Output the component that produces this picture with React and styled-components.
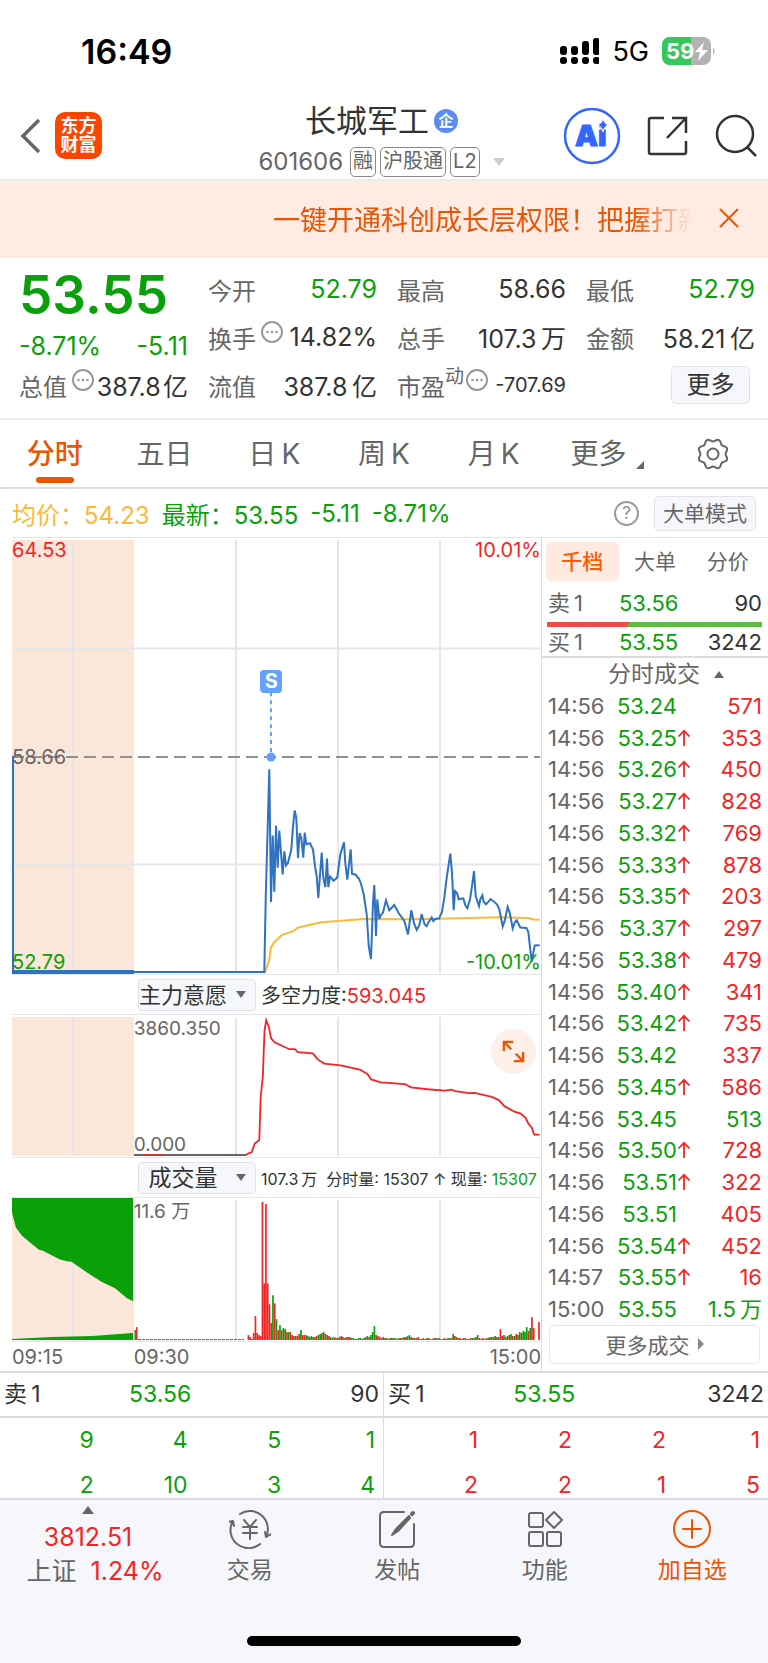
import React from 'react'
import styled, { createGlobalStyle, ThemeProvider } from 'styled-components'

const theme = {
  up: '#f52424',
  down: '#0aa00a',
  brand: '#ea5504',
  dark: '#333333',
  muted: '#666666',
  line: '#e3e6ec',
  rule: '#d9dce3',
  panel: '#f6f7fa',
  auction: '#fbe6da',
  price: '#2f72c0',
  average: '#fdb933',
  marker: '#62a2fb',
}

const GlobalStyle = createGlobalStyle`
  * {
    box-sizing: border-box;
  }

  body {
    margin: 0;
    background: #ffffff;
    color: #333333;
    font-family: Inter, "Noto Sans CJK SC", sans-serif;
  }

  button,
  select {
    margin: 0;
    padding: 0;
    border: 0;
    background: none;
    color: inherit;
    font: inherit;
    cursor: pointer;
  }

  svg {
    display: block;
    flex-shrink: 0;
  }
`

const tone = ({ theme: t, $tone }) => t[$tone] || t.dark

const Page = styled.div`
  display: flex;
  flex-direction: column;
  min-height: 100vh;
`

/* ---------- status bar ---------- */

const StatusBar = styled.div`
  display: flex;
  align-items: center;
  justify-content: space-between;
  height: 96px;
  padding: 6px 52px 0 81px;
  color: #000000;
`

const Clock = styled.time`
  font-size: 34px;
  font-weight: 600;
`

const StatusIcons = styled.div`
  display: flex;
  align-items: center;
  gap: 13px;
  font-size: 27px;
`

const Signal = () => (
  <svg width="40" height="28" viewBox="0 0 40 28">
    {[10, 10, 15, 18].map((h, i) => (
      <g key={i}>
        <rect x={1 + i * 11} y={19 - h} width="7" height={h - 1} rx="3" />
        <rect x={1 + i * 11} y="20" width="7" height="7" rx="3" />
      </g>
    ))}
  </svg>
)

const Battery = () => (
  <svg width="54" height="28" viewBox="0 0 54 28">
    <defs>
      <clipPath id="battery">
        <rect width="49" height="28" rx="8" />
      </clipPath>
    </defs>
    <g clipPath="url(#battery)">
      <rect width="49" height="28" fill="#b3b3b3" />
      <rect width="29" height="28" fill="#34c759" />
    </g>
    <path d="M51 10 q3 4 0 8z" fill="#b3b3b3" />
    <text x="4" y="22" fill="#fff" fontSize="22" fontWeight="700">59</text>
    <path d="M42 5 L33 15 H38 L36 24 L46 13 H40z" fill="#fff" />
  </svg>
)

/* ---------- title bar ---------- */

const TitleBar = styled.header`
  display: grid;
  grid-template-columns: 1fr auto 1fr;
  align-items: center;
  height: 85px;
  padding: 0 10px 0 19px;
  border-bottom: 2px solid #ececec;
`

const TitleSide = styled.div`
  display: flex;
  align-items: center;
  gap: 12px;
  padding-bottom: 4px;
`

const TitleActions = styled(TitleSide)`
  justify-content: flex-end;
  gap: 26px;
`

const AppLogo = styled.span`
  width: 47px;
  height: 47px;
  padding: 4px 5px;
  border-radius: 10px;
  background: #ff4400;
  color: #ffffff;
  font-size: 18px;
  font-weight: 700;
  line-height: 19px;
  text-align: center;
`

const TitleText = styled.div`
  padding: 3px 14px 0 0;
`

const StockName = styled.h1`
  display: flex;
  align-items: center;
  justify-content: center;
  gap: 5px;
  margin: 0;
  font-size: 31px;
  font-weight: 400;
  line-height: 42px;
`

const CompanyBadge = styled.span`
  width: 24px;
  height: 24px;
  border-radius: 50%;
  background: #5b8def;
  color: #ffffff;
  font-size: 15px;
  font-weight: 700;
  line-height: 23px;
  text-align: center;
`

const StockCode = styled.div`
  display: flex;
  align-items: center;
  gap: 4px;
  margin-top: 3px;
  color: ${({ theme }) => theme.muted};
  font-size: 24px;
  line-height: 34px;
`

const Code = styled.span`
  margin-right: 3px;
`

const Tag = styled.span`
  height: 30px;
  padding: 0 2px;
  border: 1px solid #888888;
  border-radius: 5px;
  font-size: 20px;
  line-height: 27px;
`

const Caret = styled.i`
  width: 0;
  height: 0;
  margin-left: ${({ $space }) => $space || 0}px;
  border: ${({ $size }) => $size}px solid transparent;
  border-top-width: ${({ $up, $size }) => ($up ? 0 : $size + 2)}px;
  border-bottom-width: ${({ $up, $size }) => ($up ? $size + 2 : 0)}px;
  border-top-color: ${({ $color }) => $color};
  border-bottom-color: ${({ $color }) => $color};
`

/* ---------- banner ---------- */

const Banner = styled.div`
  display: flex;
  align-items: center;
  justify-content: flex-end;
  height: 77px;
  padding: 0 29px 3px 0;
  background: #feece4;
  color: ${({ theme }) => theme.brand};
`

const BannerText = styled.a`
  margin-right: 14px;
  color: inherit;
  font-size: 27px;
  white-space: nowrap;
  text-decoration: none;
  mask-image: linear-gradient(to right, #000 84%, transparent 97%);
`

/* ---------- quote ---------- */

const Quote = styled.section`
  display: grid;
  grid-template-columns: repeat(4, 1fr);
  grid-auto-rows: 48px;
  column-gap: 20px;
  padding: 7px 13px 9px 19px;
`

const PriceBlock = styled.div`
  grid-row: span 2;
  color: ${({ theme }) => theme.down};
`

const Price = styled.div`
  font-size: 53px;
  font-weight: 600;
  line-height: 60px;
`

const Change = styled.div`
  display: flex;
  justify-content: space-between;
  font-size: 25px;
  line-height: 42px;
`

const Stat = styled.div`
  display: flex;
  align-items: center;
  white-space: nowrap;
`

const StatLabel = styled.span`
  color: ${({ theme }) => theme.muted};
  font-size: 24px;
`

const Super = styled.sup`
  align-self: flex-start;
  color: ${({ theme }) => theme.muted};
  font-size: 19px;
  line-height: 32px;
`

const StatValue = styled.span`
  margin-left: auto;
  color: ${tone};
  font-size: ${({ $small }) => ($small ? 20 : 25)}px;
`

const HintButton = styled.button`
  align-self: flex-start;
  margin: 8px 0 0 ${({ $flush }) => ($flush ? 2 : 5)}px;
`

const Hint = ({ flush }) => (
  <HintButton $flush={flush} aria-label="说明">
    <svg width="22" height="22" viewBox="0 0 22 22" fill="#999">
      <circle cx="11" cy="11" r="10" fill="none" stroke="#999" strokeWidth="2" />
      <circle cx="6.5" cy="11" r="1.3" />
      <circle cx="11" cy="11" r="1.3" />
      <circle cx="15.5" cy="11" r="1.3" />
    </svg>
  </HintButton>
)

const BoxButton = styled.button`
  border: 1px solid #dfe4ec;
  border-radius: 5px;
  background: ${({ theme }) => theme.panel};
`

const MoreButton = styled(BoxButton)`
  width: 79px;
  height: 38px;
  margin-left: auto;
  margin-right: 5px;
  color: ${({ theme }) => theme.dark};
  font-size: 24px;
  line-height: 34px;
`

/* ---------- period tabs ---------- */

const Tabs = styled.nav`
  display: grid;
  grid-template-columns: repeat(7, 1fr);
  height: 71px;
  border-top: 2px solid #ededed;
  border-bottom: 2px solid ${({ theme }) => theme.rule};
`

const Tab = styled.button`
  display: flex;
  flex-direction: column;
  align-items: center;
  justify-content: flex-end;
  gap: 3px;
  color: ${({ theme, $active }) => ($active ? theme.brand : theme.muted)};
  font-size: 28px;
  font-weight: ${({ $active }) => ($active ? 500 : 400)};
  line-height: 40px;

  &::after {
    content: '';
    width: 38px;
    height: 6px;
    margin-bottom: 4px;
    border-radius: 3px;
    background: ${({ theme, $active }) => ($active ? theme.brand : 'transparent')};
  }
`

const TabLabel = styled.span`
  display: flex;
  align-items: center;
  gap: 10px;
  height: 40px;
  padding-left: ${({ $menu }) => ($menu ? 8 : 0)}px;
`

const Corner = styled.i`
  align-self: flex-end;
  margin-bottom: 5px;
  border: 4px solid ${({ theme }) => theme.muted};
  border-top-color: transparent;
  border-left-color: transparent;
`

/* ---------- minute chart ---------- */

const Summary = styled.div`
  display: flex;
  align-items: center;
  height: 48px;
  padding: 0 12px;
  font-size: 24px;
`

const SummaryItem = styled.span`
  margin-right: 12px;
  color: ${tone};
`

const QuestionButton = styled.button`
  width: 25px;
  height: 25px;
  margin-left: auto;
  margin-right: 15px;
  border: 2px solid #999999;
  border-radius: 50%;
  color: #888888;
  font-size: 17px;
  line-height: 20px;
`

const ModeButton = styled(BoxButton)`
  height: 35px;
  padding: 0 8px;
  color: ${({ theme }) => theme.muted};
  font-size: 21px;
  line-height: 31px;
`

const Board = styled.main`
  display: flex;
  border-bottom: 2px solid ${({ theme }) => theme.rule};
`

const Charts = styled.section`
  flex: 1;
  min-width: 0;
  padding-left: 12px;
  border-right: 1px solid ${({ theme }) => theme.rule};
`

const ChartBox = styled.div`
  position: relative;
  height: ${({ $height }) => $height}px;
  border-top: 1px solid ${({ theme }) => theme.line};
  border-bottom: 1px solid ${({ theme }) => theme.line};

  > svg {
    width: 100%;
    height: 100%;
  }
`

const AxisLabel = styled.span`
  position: absolute;
  top: ${({ $top }) => ($top === undefined ? 'auto' : `${$top}px`)};
  bottom: ${({ $top }) => ($top === undefined ? '0' : 'auto')};
  left: ${({ $right, $inset }) => ($right ? 'auto' : $inset ? '23%' : '0')};
  right: ${({ $right }) => ($right ? '0' : 'auto')};
  color: ${tone};
  font-size: ${({ $inset }) => ($inset ? 19 : 20)}px;
  line-height: 24px;
`

const SellMark = styled.span`
  position: absolute;
  top: 132px;
  left: 49%;
  width: 22px;
  height: 23px;
  margin-left: -11px;
  border-radius: 4px;
  background: ${({ theme }) => theme.marker};
  color: #ffffff;
  font-size: 20px;
  font-weight: 700;
  line-height: 23px;
  text-align: center;
`

const ExpandButton = styled.button`
  position: absolute;
  top: 14px;
  right: 5px;
  width: 45px;
  height: 45px;
  padding: 11px;
  border-radius: 50%;
  background: #fdf0e9;
`

const IndicatorBar = styled.div`
  display: flex;
  align-items: center;
  height: 39px;
  padding-left: 126px;
`

const SelectWrap = styled.label`
  position: relative;
  width: 118px;
  height: 32px;
  margin-right: 5px;
  flex-shrink: 0;
`

const IndicatorSelect = styled.select`
  width: 100%;
  height: 100%;
  padding: 0 28px 0 0;
  appearance: none;
  border: 1px solid #dfe3e8;
  border-radius: 4px;
  background: ${({ theme }) => theme.panel};
  color: ${({ theme }) => theme.dark};
  font-size: ${({ $size }) => $size}px;
  text-align-last: center;
`

const SelectArrow = styled(Caret)`
  position: absolute;
  top: 12px;
  right: 10px;
  pointer-events: none;
`

const IndicatorText = styled.span`
  font-size: ${({ $small }) => ($small ? 16 : 20)}px;
  white-space: pre;
`

const Tint = styled.span`
  color: ${tone};
`

const TimeAxis = styled.div`
  display: grid;
  grid-template-columns: 23% 1fr auto;
  height: 29px;
  color: ${({ theme }) => theme.muted};
  font-size: 20px;
  line-height: 30px;
`

const PRICE_LINE =
  '1,219 1,436 252.3,436 253.7,363 257.3,232.3 259,365.7 260.7,299 262.3,355.3 264,289 265.7,331.3 ' +
  '267.3,294 270.7,338 272.3,314.7 274,329 276,326.3 279.3,313 281,289.7 282.7,273.7 284.3,281.3 ' +
  '286,321.3 287.7,296.3 289.3,301.3 291.3,321 292.7,296 294.3,307.7 298,306.7 301,313 303,329.7 ' +
  '304.7,339.7 306.3,361.7 309.7,316 311.3,341.3 313.3,350.7 315,322 316.3,350.7 318,340 321.7,344.3 ' +
  '325.3,341 328.3,318 332,305.7 333.3,326.3 335.3,343.3 338.7,312.7 340,337.3 343.7,338.3 347,342.3 ' +
  '349,347.3 351.7,358 354.7,378 356.7,409.7 359,423 361,366.3 362.3,348.7 364,399.7 365.3,363 ' +
  '367.3,383 368.7,379 371,376.3 374,364 377.3,374 382.3,368.7 386.3,376.3 392.3,384.7 396,398.3 ' +
  '399.3,374 402,387 404.7,393.7 407.3,389 409.7,378 412.7,388.3 414.7,390 416.7,385.7 419.7,381.3 ' +
  '421.3,384.7 423.3,382.7 427,382.3 430,375.7 432.3,361.3 434.7,341.3 438.3,317 440,336.3 441.7,374 ' +
  '443,354.7 445,356.7 446.7,363 451.3,362 453.3,369 455.3,372 458,363 460,349.7 462,334.7 463.7,359.7 ' +
  '467,369.7 468.3,363 470.3,359 471.7,365.7 474,368 478.7,362.7 485,368 487.3,373 490.7,390.3 ' +
  '492.7,384.7 495.7,370.7 497.7,376.3 500.7,392.3 502.7,386.3 504.7,384 508.3,391.3 514.3,391.7 ' +
  '516.3,395.7 519.7,425.7 522.7,409.3 527.7,409'

const AVERAGE_LINE =
  '253,437 257.3,423 259,411.3 262,406.3 269.7,399 281.7,394.7 286.3,391.3 309.7,386 326.3,384.7 ' +
  '351.3,382.7 394.7,383 438,382.3 488,381 516.3,381.7 521.3,383.3 527.7,383.5'

const FORCE_LINE =
  '234,142 236.5,140.3 239.6,139.3 242.8,130.3 247.3,126.7 248.7,82.7 250.8,62.7 252.5,16 254.2,5.3 ' +
  '257,12.7 259.1,23.7 262.6,27.7 268.8,30.7 277.5,34.7 282.8,34.7 285.9,37.7 300.8,39 306,45.3 ' +
  '312.3,49.3 328.6,51 347.8,55.3 355.4,59.7 359.2,65.3 368.6,68.3 393,70 398.9,73.3 415.5,75.3 ' +
  '432.9,76.7 439.9,75.7 443.3,77.3 457.2,79.3 462.5,79 479.8,83 486.8,86.3 492.7,92.7 502.4,98 ' +
  '508.7,100 513.6,104.3 516.3,110 519.8,114.3 522.2,121.3 527.5,121.3'

// bar heights, one per slot; below zero means a falling minute
const VOLUMES = [
  5, 3, 1, 7, 24, 7, 5, 4, 139, 57, 137, 57, 36, 17, -45, 37, -21, 10, -15, 10, -12, -11, 8, -8, 8, 5, -4,
  4, 4, 6, -10, 5, 5, -5, -4, 3, -4, 3, -3, 4, -5, -6, 7, -8, 6, -5, 4, -3, -2, 3, -2, 2, -3, 4, 3, -2, 3,
  3, -3, 2, -2, 1, -1, -2, -2, 1, -2, 3, -4, 3, -5, -8, -14, 5, 4, -3, 2, 3, -2, 2, 1, -2, 2, -2, -2, 1,
  -2, 2, -2, 3, -3, -4, -5, 3, 2, -2, 2, 3, 1, -1, 2, -1, -2, 2, -1, 1, 2, -2, 2, -2, 1, -1, 2, 1, -2, 2,
  -2, -6, 4, -3, 2, 2, 1, -2, 2, 1, -1, 2, -2, -2, 3, -5, 2, 1, 2, -1, -2, 2, -3, -3, 3, -4, 3, -3, 11, 4,
  -5, 3, -4, 5, -6, 4, -4, 6, -5, -8, 7, -9, -8, -13, 9, -12, 23, 12, 0, 0, 18,
]

const plot = { vectorEffect: 'non-scaling-stroke', fill: 'none' }

const Grid = ({ height }) => (
  <>
    <rect x="0" y="2" width="122" height={height - 3} fill={theme.auction} />
    <g stroke={theme.line} strokeWidth="2">
      {[61, 224, 326, 428].map(x => (
        <line key={x} x1={x} x2={x} y1="2" y2={height - 1} />
      ))}
    </g>
  </>
)

const PriceChart = () => (
  <ChartBox $height={438}>
    <svg viewBox="0 0 529 438" preserveAspectRatio="none">
      <Grid height={438} />
      <path d="M0 111H529M0 328H529" stroke={theme.line} strokeWidth="2" />
      <path d="M0 220H528" stroke="#909090" strokeWidth="2" strokeDasharray="12 6" />
      <path d="M0 436H122" stroke={theme.price} strokeWidth="4" />
      <polyline points={AVERAGE_LINE} stroke={theme.average} strokeWidth="2" {...plot} />
      <polyline points={PRICE_LINE} stroke={theme.price} strokeWidth="2" {...plot} />
      <path d="M259 155V215" stroke={theme.marker} strokeWidth="2" strokeDasharray="4 4" />
      <circle cx="259" cy="220" r="4.5" fill={theme.marker} />
    </svg>
    <AxisLabel $top={0} $tone="up">64.53</AxisLabel>
    <AxisLabel $top={0} $tone="up" $right>10.01%</AxisLabel>
    <AxisLabel $top={207} $tone="muted">58.66</AxisLabel>
    <AxisLabel $tone="down">52.79</AxisLabel>
    <AxisLabel $tone="down" $right>-10.01%</AxisLabel>
    <SellMark>S</SellMark>
  </ChartBox>
)

const ForceChart = () => (
  <ChartBox $height={144}>
    <svg viewBox="0 0 529 144" preserveAspectRatio="none">
      <Grid height={144} />
      <path d="M122 142H234" stroke="#333" strokeWidth="1.5" />
      <path d="M131 142H151" stroke={theme.up} strokeWidth="1.5" />
      <polyline points={FORCE_LINE} stroke={theme.up} strokeWidth="1.8" {...plot} />
    </svg>
    <AxisLabel $top={2} $tone="muted" $inset>3860.350</AxisLabel>
    <AxisLabel $tone="muted" $inset>0.000</AxisLabel>
    <ExpandButton aria-label="展开">
      <svg width="23" height="23" viewBox="0 0 25 25" fill="none" stroke={theme.brand} strokeWidth="2.500">
        <path d="M2 12V2H12M2 2L10 10M23 13V23H13M23 23L15 15" />
      </svg>
    </ExpandButton>
  </ChartBox>
)

const VolumeChart = () => (
  <ChartBox $height={145}>
    <svg viewBox="0 0 529 144" preserveAspectRatio="none">
      <Grid height={144} />
      <path
        d="M0 0V14L1 19L4 30L10 38L22 48L27 52L31 53L40 58L48 62L56 64H59L75 75L89 84L103 91L115 101L121 104V0Z"
        fill={theme.down}
      />
      <path d="M0 142L40 140L80 139L121 136V143H0Z" fill={theme.down} />
      <path d="M123.200 143V133" stroke={theme.down} strokeWidth="1.5" />
      <path d="M124.700 143V130" stroke={theme.up} strokeWidth="1.5" />
      <path d="M126 142.500H232" stroke={theme.up} strokeWidth="1" strokeDasharray="3 1" />
      {VOLUMES.map((v, i) => (
        <rect
          key={i}
          x={235.6 + i * 1.75}
          y={143 - Math.abs(v)}
          width="1.7"
          height={Math.abs(v)}
          fill={v > 0 ? theme.up : theme.down}
        />
      ))}
    </svg>
    <AxisLabel $top={2} $tone="muted" $inset>11.6 万</AxisLabel>
  </ChartBox>
)

/* ---------- order side panel ---------- */

const Side = styled.aside`
  display: flex;
  flex-direction: column;
  width: 226px;
  border-top: 1px solid ${({ theme }) => theme.line};
`

const SideTabs = styled.div`
  display: grid;
  grid-template-columns: repeat(3, 1fr);
  padding: 4px 4px 3px;
`

const SideTab = styled.button`
  height: 39px;
  border-radius: 6px;
  background: ${({ $active }) => ($active ? '#feeae0' : 'transparent')};
  color: ${({ theme, $active }) => ($active ? '#ff5a00' : theme.muted)};
  font-size: 21px;
  font-weight: ${({ $active }) => ($active ? 500 : 400)};
  line-height: 36px;
`

const BestRow = styled.div`
  display: grid;
  grid-template-columns: 71px 1fr 1fr;
  padding: 0 6px;
  color: ${({ theme }) => theme.muted};
  font-size: 22px;
  line-height: ${({ $height }) => $height}px;

  > :last-child {
    text-align: right;
  }
`

const RatioBar = styled.div`
  height: 5px;
  margin: 0 6px 2px 5px;
  background: linear-gradient(120deg, #ef4b4e 38%, #5fba46 38%);
`

const TradesTitle = styled.h2`
  display: flex;
  align-items: center;
  justify-content: center;
  margin: 0;
  padding-left: 22px;
  border-top: 2px solid ${({ theme }) => theme.rule};
  color: ${({ theme }) => theme.muted};
  font-size: 23px;
  font-weight: 400;
  line-height: 32px;
`

const TradesWrap = styled.div`
  flex: 1;
  min-height: 0;
  padding: 0 6px;
`

const Trades = styled.table`
  width: 100%;
  height: 100%;
  border-collapse: collapse;
  font-size: 22px;
  line-height: 28px;

  td {
    padding: 0;
    text-align: right;
    white-space: nowrap;
  }

  td:first-child {
    color: ${({ theme }) => theme.muted};
    text-align: left;
  }

  td:last-child {
    width: 69px;
  }
`

const Arrow = styled.span`
  display: inline-block;
  width: 16px;
  color: ${({ theme }) => theme.up};
  text-align: left;

  svg {
    width: 14px;
    height: 17px;
  }
`

const MoreTrades = styled.button`
  display: flex;
  align-items: center;
  justify-content: center;
  gap: 8px;
  height: 39px;
  margin: 0 8px 7px 7px;
  padding-bottom: 2px;
  border: 1px solid #e6e6e6;
  border-radius: 6px;
  color: ${({ theme }) => theme.muted};
  font-size: 21px;
`

const TRADES = [
  ['14:56', '53.24', false, '571'],
  ['14:56', '53.25', true, '353'],
  ['14:56', '53.26', true, '450'],
  ['14:56', '53.27', true, '828'],
  ['14:56', '53.32', true, '769'],
  ['14:56', '53.33', true, '878'],
  ['14:56', '53.35', true, '203'],
  ['14:56', '53.37', true, '297'],
  ['14:56', '53.38', true, '479'],
  ['14:56', '53.40', true, '341'],
  ['14:56', '53.42', true, '735'],
  ['14:56', '53.42', false, '337'],
  ['14:56', '53.45', true, '586'],
  ['14:56', '53.45', false, '513', 'down'],
  ['14:56', '53.50', true, '728'],
  ['14:56', '53.51', true, '322'],
  ['14:56', '53.51', false, '405'],
  ['14:56', '53.54', true, '452'],
  ['14:57', '53.55', true, '16'],
  ['15:00', '53.55', false, '1.5\u2009万', 'down'],
]

const SidePanel = () => (
  <Side>
    <SideTabs>
      <SideTab $active>千档</SideTab>
      <SideTab>大单</SideTab>
      <SideTab>分价</SideTab>
    </SideTabs>
    <BestRow $height={38}>
      <span>{'卖\u20091'}</span>
      <Tint $tone="down">53.56</Tint>
      <Tint>90</Tint>
    </BestRow>
    <RatioBar />
    <BestRow $height={27}>
      <span>{'买\u20091'}</span>
      <Tint $tone="down">53.55</Tint>
      <Tint>3242</Tint>
    </BestRow>
    <TradesTitle>
      分时成交
      <Caret $up $size={5} $space={14} $color={theme.muted} />
    </TradesTitle>
    <TradesWrap>
      <Trades>
        <tbody>
          {TRADES.map(([time, price, rising, volume, side], i) => (
            <tr key={i}>
              <td>{time}</td>
              <td>
                <Tint $tone="down">{price}</Tint>
                <Arrow>
                  {rising && (
                    <svg viewBox="0 0 14 17" fill="none" stroke="currentColor" strokeWidth="1.8">
                      <path d="M7 17V2M1.500 7.500L7 1.800L12.500 7.500" />
                    </svg>
                  )}
                </Arrow>
              </td>
              <td>
                <Tint $tone={side || 'up'}>{volume}</Tint>
              </td>
            </tr>
          ))}
        </tbody>
      </Trades>
    </TradesWrap>
    <MoreTrades>
      更多成交
      <svg width="6" height="12" viewBox="0 0 6 12">
        <path d="M0 0L6 6L0 12Z" fill="#888" />
      </svg>
    </MoreTrades>
  </Side>
)

/* ---------- order depth ---------- */

const Depth = styled.section`
  display: grid;
  grid-template-columns: 1fr 1fr;
`

const DepthHalf = styled.div`
  border-right: 1px solid ${({ theme }) => theme.rule};

  &:last-child {
    border-right: 0;
  }
`

const DepthHead = styled.div`
  display: grid;
  grid-template-columns: 1fr 1fr 1fr;
  padding: 0 4px;
  border-bottom: 2px solid ${({ theme }) => theme.rule};
  font-size: 23px;
  line-height: 43px;

  > :last-child {
    text-align: right;
  }
`

const DepthQueue = styled.div`
  display: grid;
  grid-template-columns: repeat(4, 1fr);
  row-gap: 20px;
  padding: 10px 8px 0 0;
  color: ${tone};
  font-size: 23px;
  line-height: 25px;
  text-align: right;
`

const DepthSide = ({ label, price, volume, queue, side }) => (
  <DepthHalf>
    <DepthHead>
      <span>{label}</span>
      <Tint $tone="down">{price}</Tint>
      <span>{volume}</span>
    </DepthHead>
    <DepthQueue $tone={side}>
      {queue.map((lot, i) => (
        <span key={i}>{lot}</span>
      ))}
    </DepthQueue>
  </DepthHalf>
)

/* ---------- bottom bar ---------- */

const BottomBar = styled.footer`
  display: flex;
  flex: 1;
  flex-direction: column;
  justify-content: space-between;
  border-top: 2px solid ${({ theme }) => theme.rule};
  background: ${({ theme }) => theme.panel};
`

const Actions = styled.div`
  display: grid;
  grid-template-columns: 176px repeat(4, 1fr);
  padding-right: 2px;
`

const IndexButton = styled.button`
  display: flex;
  flex-direction: column;
  align-items: center;
  padding-top: 6px;
  color: ${({ theme }) => theme.up};
  font-size: 25px;
  line-height: 34px;
  white-space: pre;

  > i {
    margin-bottom: 6px;
  }
`

const IndexName = styled.span`
  padding-left: 14px;
`

const Action = styled.button`
  display: flex;
  flex-direction: column;
  align-items: center;
  gap: 5px;
  padding-top: 9px;
  color: ${tone};
  font-size: 23px;
  line-height: 32px;
`

const HomeIndicator = styled.div`
  width: 274px;
  height: 10px;
  margin: 0 auto 17px;
  border-radius: 5px;
  background: #000000;
`

const ActionIcon = ({ children }) => (
  <svg
    width="42"
    height="40"
    viewBox="0 0 42 40"
    fill="none"
    stroke="currentColor"
    strokeWidth="2"
    strokeLinecap="round"
    strokeLinejoin="round"
  >
    {children}
  </svg>
)

// eight soft teeth around the centre of a 32 x 32 box
const gearPoints = Array.from({ length: 96 }, (_, i) => {
  const angle = (i / 96) * Math.PI * 2
  const radius = 13.8 - 1.3 * Math.cos(angle * 8)
  return `${(16 + radius * Math.cos(angle)).toFixed(2)},${(16 + radius * Math.sin(angle)).toFixed(2)}`
}).join(' ')

const App = () => (
  <ThemeProvider theme={theme}>
    <GlobalStyle />
    <Page>
      <StatusBar>
        <Clock>16:49</Clock>
        <StatusIcons>
          <Signal />
          5G
          <Battery />
        </StatusIcons>
      </StatusBar>

      <TitleBar>
        <TitleSide>
          <button aria-label="返回">
            <svg width="24" height="38" viewBox="0 0 24 38" fill="none" stroke="#666" strokeWidth="3.500">
              <path d="M20 3L4 19L20 35" />
            </svg>
          </button>
          <AppLogo>东方财富</AppLogo>
        </TitleSide>
        <TitleText>
          <StockName>
            长城军工
            <CompanyBadge>企</CompanyBadge>
          </StockName>
          <StockCode>
            <Code>601606</Code>
            <Tag>融</Tag>
            <Tag>沪股通</Tag>
            <Tag>L2</Tag>
            <Caret $size={6} $space={9} $color="#cccccc" />
          </StockCode>
        </TitleText>
        <TitleActions>
          <button aria-label="AI 助手">
            <svg width="58" height="58" viewBox="0 0 58 58">
              <circle cx="29" cy="29" r="27" fill="none" stroke="#3366ff" strokeWidth="2.500" />
              <g fill="#3366ff">
                <text x="12" y="39" fontSize="29" fontWeight="900" stroke="#3366ff" strokeWidth="1">
                  Ai
                </text>
                <path d="M40 11Q41 17 46 18Q41 19 40 25Q39 19 34 18Q39 17 40 11Z" stroke="#fff" strokeWidth="1" />
              </g>
            </svg>
          </button>
          <button aria-label="分享">
            <svg width="42" height="42" viewBox="0 0 42 42" fill="none" stroke="#333" strokeWidth="2.500">
              <path d="M17 3H4Q2 3 2 5V37Q2 39 4 39H37Q39 39 39 37V26M25 3H39V18M39 3L20 23" />
            </svg>
          </button>
          <button aria-label="搜索">
            <svg width="43" height="43" viewBox="0 0 43 43" fill="none" stroke="#333" strokeWidth="2.500">
              <circle cx="20" cy="20" r="18" />
              <path d="M32 33L41 42" />
            </svg>
          </button>
        </TitleActions>
      </TitleBar>

      <Banner>
        <BannerText href="#open">一键开通科创成长层权限！把握打新</BannerText>
        <button aria-label="关闭">
          <svg width="20" height="20" viewBox="0 0 20 20" stroke={theme.brand} strokeWidth="2">
            <path d="M1 1L19 19M19 1L1 19" />
          </svg>
        </button>
      </Banner>

      <Quote>
        <PriceBlock>
          <Price>53.55</Price>
          <Change>
            <span>-8.71%</span>
            <span>-5.11</span>
          </Change>
        </PriceBlock>
        <Stat>
          <StatLabel>今开</StatLabel>
          <StatValue $tone="down">52.79</StatValue>
        </Stat>
        <Stat>
          <StatLabel>最高</StatLabel>
          <StatValue>58.66</StatValue>
        </Stat>
        <Stat>
          <StatLabel>最低</StatLabel>
          <StatValue $tone="down">52.79</StatValue>
        </Stat>
        <Stat>
          <StatLabel>换手</StatLabel>
          <Hint />
          <StatValue>14.82%</StatValue>
        </Stat>
        <Stat>
          <StatLabel>总手</StatLabel>
          <StatValue>{'107.3\u2009万'}</StatValue>
        </Stat>
        <Stat>
          <StatLabel>金额</StatLabel>
          <StatValue>{'58.21\u2009亿'}</StatValue>
        </Stat>
        <Stat>
          <StatLabel>总值</StatLabel>
          <Hint />
          <StatValue>{'387.8\u200a亿'}</StatValue>
        </Stat>
        <Stat>
          <StatLabel>流值</StatLabel>
          <StatValue>{'387.8\u2009亿'}</StatValue>
        </Stat>
        <Stat>
          <StatLabel>市盈</StatLabel>
          <Super>动</Super>
          <Hint flush />
          <StatValue $small>-707.69</StatValue>
        </Stat>
        <Stat>
          <MoreButton>更多</MoreButton>
        </Stat>
      </Quote>

      <Tabs>
        <Tab $active>
          <TabLabel>分时</TabLabel>
        </Tab>
        {['五日', '日\u2009K', '周\u2009K', '月\u2009K'].map(label => (
          <Tab key={label}>
            <TabLabel>{label}</TabLabel>
          </Tab>
        ))}
        <Tab>
          <TabLabel $menu>
            更多
            <Corner />
          </TabLabel>
        </Tab>
        <Tab aria-label="设置">
          <TabLabel>
            <svg width="32" height="32" viewBox="0 0 32 32" fill="none" stroke="#666" strokeWidth="2">
              <polygon points={gearPoints} />
              <circle cx="16" cy="16" r="5.500" />
            </svg>
          </TabLabel>
        </Tab>
      </Tabs>

      <Summary>
        <SummaryItem $tone="average">均价：54.23</SummaryItem>
        <SummaryItem $tone="down">最新：53.55</SummaryItem>
        <SummaryItem $tone="down">-5.11</SummaryItem>
        <SummaryItem $tone="down">-8.71%</SummaryItem>
        <QuestionButton aria-label="帮助">?</QuestionButton>
        <ModeButton>大单模式</ModeButton>
      </Summary>

      <Board>
        <Charts>
          <PriceChart />
          <IndicatorBar>
            <SelectWrap>
              <IndicatorSelect $size={22} aria-label="指标">
                <option>主力意愿</option>
              </IndicatorSelect>
              <SelectArrow $size={5} $color={theme.muted} />
            </SelectWrap>
            <IndicatorText>
              多空力度:<Tint $tone="up">593.045</Tint>
            </IndicatorText>
          </IndicatorBar>
          <ForceChart />
          <IndicatorBar>
            <SelectWrap>
              <IndicatorSelect $size={23} aria-label="副图指标">
                <option>成交量</option>
              </IndicatorSelect>
              <SelectArrow $size={5} $color={theme.muted} />
            </SelectWrap>
            <IndicatorText $small>
              {'107.3\u2009万  分时量: 15307 ↑ 现量: '}
              <Tint $tone="down">15307</Tint>
            </IndicatorText>
          </IndicatorBar>
          <VolumeChart />
          <TimeAxis>
            <span>09:15</span>
            <span>09:30</span>
            <span>15:00</span>
          </TimeAxis>
        </Charts>
        <SidePanel />
      </Board>

      <Depth>
        <DepthSide label={'卖\u20091'} price="53.56" volume="90" queue={[9, 4, 5, 1, 2, 10, 3, 4]} side="down" />
        <DepthSide label={'买\u20091'} price="53.55" volume="3242" queue={[1, 2, 2, 1, 2, 2, 1, 5]} side="up" />
      </Depth>

      <BottomBar>
        <Actions>
          <IndexButton>
            <Caret $up $size={6} $color={theme.muted} />
            <span>3812.51</span>
            <IndexName>
              <Tint $tone="muted">上证</Tint>
              {'  1.24%'}
            </IndexName>
          </IndexButton>
          <Action $tone="muted">
            <ActionIcon>
              <path d="M11 5A18 18 0 0 1 37 28M37 28L42 25M37 28L36 23M31 35A18 18 0 0 1 4 12M4 12L-1 13M4 12L5 17" />
              <path d="M15 11L21 18L27 11M21 18V30M14 18H28M14 24H28" />
            </ActionIcon>
            交易
          </Action>
          <Action $tone="muted">
            <ActionIcon>
              <path d="M28 3H8Q4 3 4 7V34Q4 38 8 38H34Q38 38 38 34V15" />
              <path d="M33 7L20 20L16 26L22 22L34 9Z" fill="currentColor" />
              <path d="M36 5L37 4" strokeWidth="4" />
            </ActionIcon>
            发帖
          </Action>
          <Action $tone="muted">
            <ActionIcon>
              <rect x="5" y="4" width="14" height="14" rx="2" />
              <rect x="5" y="23" width="14" height="14" rx="2" />
              <rect x="23" y="23" width="14" height="14" rx="2" />
              <path d="M30 3L38 11L30 19L22 11Z" />
            </ActionIcon>
            功能
          </Action>
          <Action $tone="brand">
            <ActionIcon>
              <circle cx="21" cy="20" r="18" />
              <path d="M21 11V29M12 20H30" />
            </ActionIcon>
            加自选
          </Action>
        </Actions>
        <HomeIndicator />
      </BottomBar>
    </Page>
  </ThemeProvider>
)

export default App
